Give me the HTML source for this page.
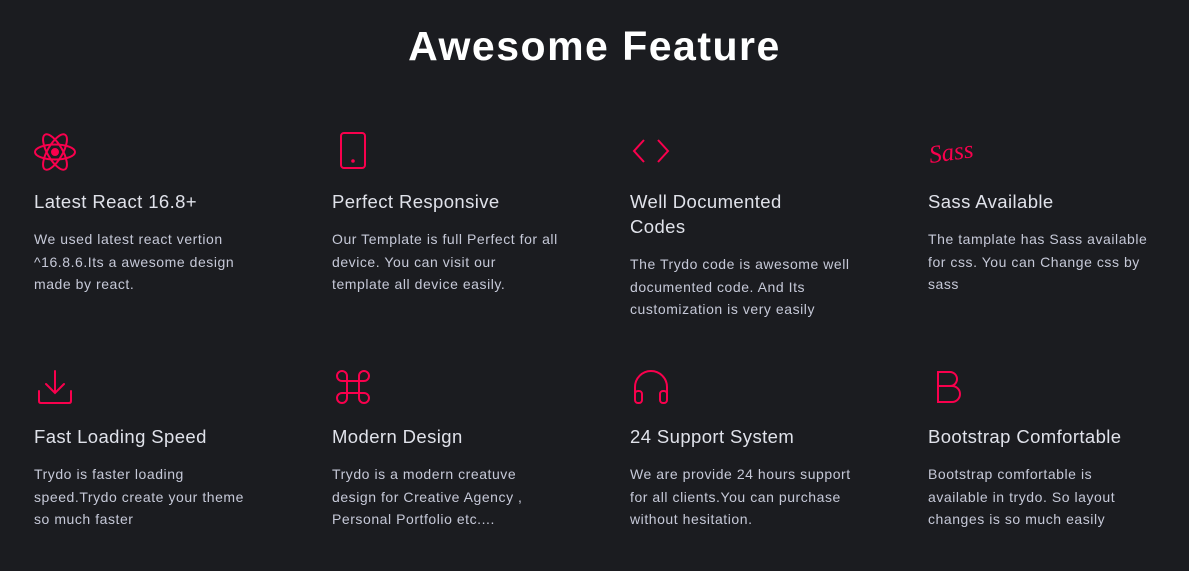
<!DOCTYPE html>
<html><head><meta charset="utf-8"><style>
*{margin:0;padding:0;box-sizing:border-box}
body{width:1189px;height:571px;background:#1b1c20;font-family:"Liberation Sans",sans-serif;color:#c6c9d8;position:relative;overflow:hidden}
h1{position:absolute;top:23px;left:0;width:1189px;text-align:center;color:#fff;font-size:41px;font-weight:700;letter-spacing:1.5px}
.c{position:absolute;width:280px}
.c svg{display:block;position:absolute;left:0}
.c h3{position:absolute;left:0;font-size:18.5px;font-weight:500;color:#e0e2ea;line-height:25px;white-space:nowrap;letter-spacing:0.4px}
.c p{position:absolute;left:0;font-size:14px;line-height:22.5px;white-space:nowrap;letter-spacing:0.55px}
</style></head><body>
<h1>Awesome Feature</h1>

<div class="c" style="left:34px;top:0">
<svg style="top:132px" width="42" height="40" viewBox="0 0 42 40" fill="none" stroke="#f9004d" stroke-width="2"><ellipse cx="21" cy="20" rx="20" ry="7.5"/><ellipse cx="21" cy="20" rx="20" ry="7.5" transform="rotate(60 21 20)"/><ellipse cx="21" cy="20" rx="20" ry="7.5" transform="rotate(-60 21 20)"/><circle cx="21" cy="20" r="3" fill="#f9004d"/></svg>
<h3 style="top:189px">Latest React 16.8+</h3>
<p style="top:228px">We used latest react vertion<br>^16.8.6.Its a awesome design<br>made by react.</p></div>

<div class="c" style="left:332px;top:0">
<svg style="top:132px;left:8px" width="26" height="38" viewBox="0 0 26 38" fill="none" stroke="#f9004d" stroke-width="2"><rect x="1" y="1" width="24" height="35" rx="3"/><circle cx="13" cy="29" r="0.8" fill="#f9004d"/></svg>
<h3 style="top:189px">Perfect Responsive</h3>
<p style="top:228px">Our Template is full Perfect for all<br>device. You can visit our<br>template all device easily.</p></div>

<div class="c" style="left:630px;top:0">
<svg style="top:138px;left:2px" width="38" height="26" viewBox="0 0 38 26" fill="none" stroke="#f9004d" stroke-width="2"><path d="M12 2L2 13L12 24M26 2L36 13L26 24"/></svg>
<h3 style="top:189px">Well Documented<br>Codes</h3>
<p style="top:253px">The Trydo code is awesome well<br>documented code. And Its<br>customization is very easily</p></div>

<div class="c" style="left:928px;top:0">
<svg style="top:134px" width="48" height="36" viewBox="0 0 48 36"><text x="1" y="28" font-family="Liberation Serif,serif" font-style="italic" font-size="25" fill="#f9004d" transform="rotate(-8 10 20)">Sass</text></svg>
<h3 style="top:189px">Sass Available</h3>
<p style="top:228px">The tamplate has Sass available<br>for css. You can Change css by<br>sass</p></div>

<div class="c" style="left:34px;top:0">
<svg style="top:369px;left:3px" width="36" height="36" viewBox="0 0 36 36" fill="none" stroke="#f9004d" stroke-width="2" stroke-linecap="round"><path d="M18 2V24M9 15L18 24L27 15M2 22V32Q2 34 4 34H32Q34 34 34 32V22"/></svg>
<h3 style="top:424px">Fast Loading Speed</h3>
<p style="top:463px">Trydo is faster loading<br>speed.Trydo create your theme<br>so much faster</p></div>

<div class="c" style="left:332px;top:0">
<svg style="top:369px;left:3px" width="36" height="36" viewBox="0 0 36 36" fill="none" stroke="#f9004d" stroke-width="2"><path d="M12 12H24V24H12ZM12 12H7A5 5 0 1 1 12 7ZM24 12V7A5 5 0 1 1 29 12ZM24 24H29A5 5 0 1 1 24 29ZM12 24V29A5 5 0 1 1 7 24Z"/></svg>
<h3 style="top:424px">Modern Design</h3>
<p style="top:463px">Trydo is a modern creatuve<br>design for Creative Agency ,<br>Personal Portfolio etc....</p></div>

<div class="c" style="left:630px;top:0">
<svg style="top:369px;left:3px" width="36" height="36" viewBox="0 0 36 36" fill="none" stroke="#f9004d" stroke-width="2"><path d="M2 30V18A16 16 0 0 1 34 18V30"/><rect x="2" y="22" width="7" height="12" rx="3"/><rect x="27" y="22" width="7" height="12" rx="3"/></svg>
<h3 style="top:424px">24 Support System</h3>
<p style="top:463px">We are provide 24 hours support<br>for all clients.You can purchase<br>without hesitation.</p></div>

<div class="c" style="left:928px;top:0">
<svg style="top:370px;left:8px" width="26" height="34" viewBox="0 0 26 34" fill="none" stroke="#f9004d" stroke-width="2"><path d="M2 2H14A7 7 0 0 1 14 16H2ZM2 16H16A8 8 0 0 1 16 32H2Z"/></svg>
<h3 style="top:424px">Bootstrap Comfortable</h3>
<p style="top:463px">Bootstrap comfortable is<br>available in trydo. So layout<br>changes is so much easily</p></div>
</body></html>
